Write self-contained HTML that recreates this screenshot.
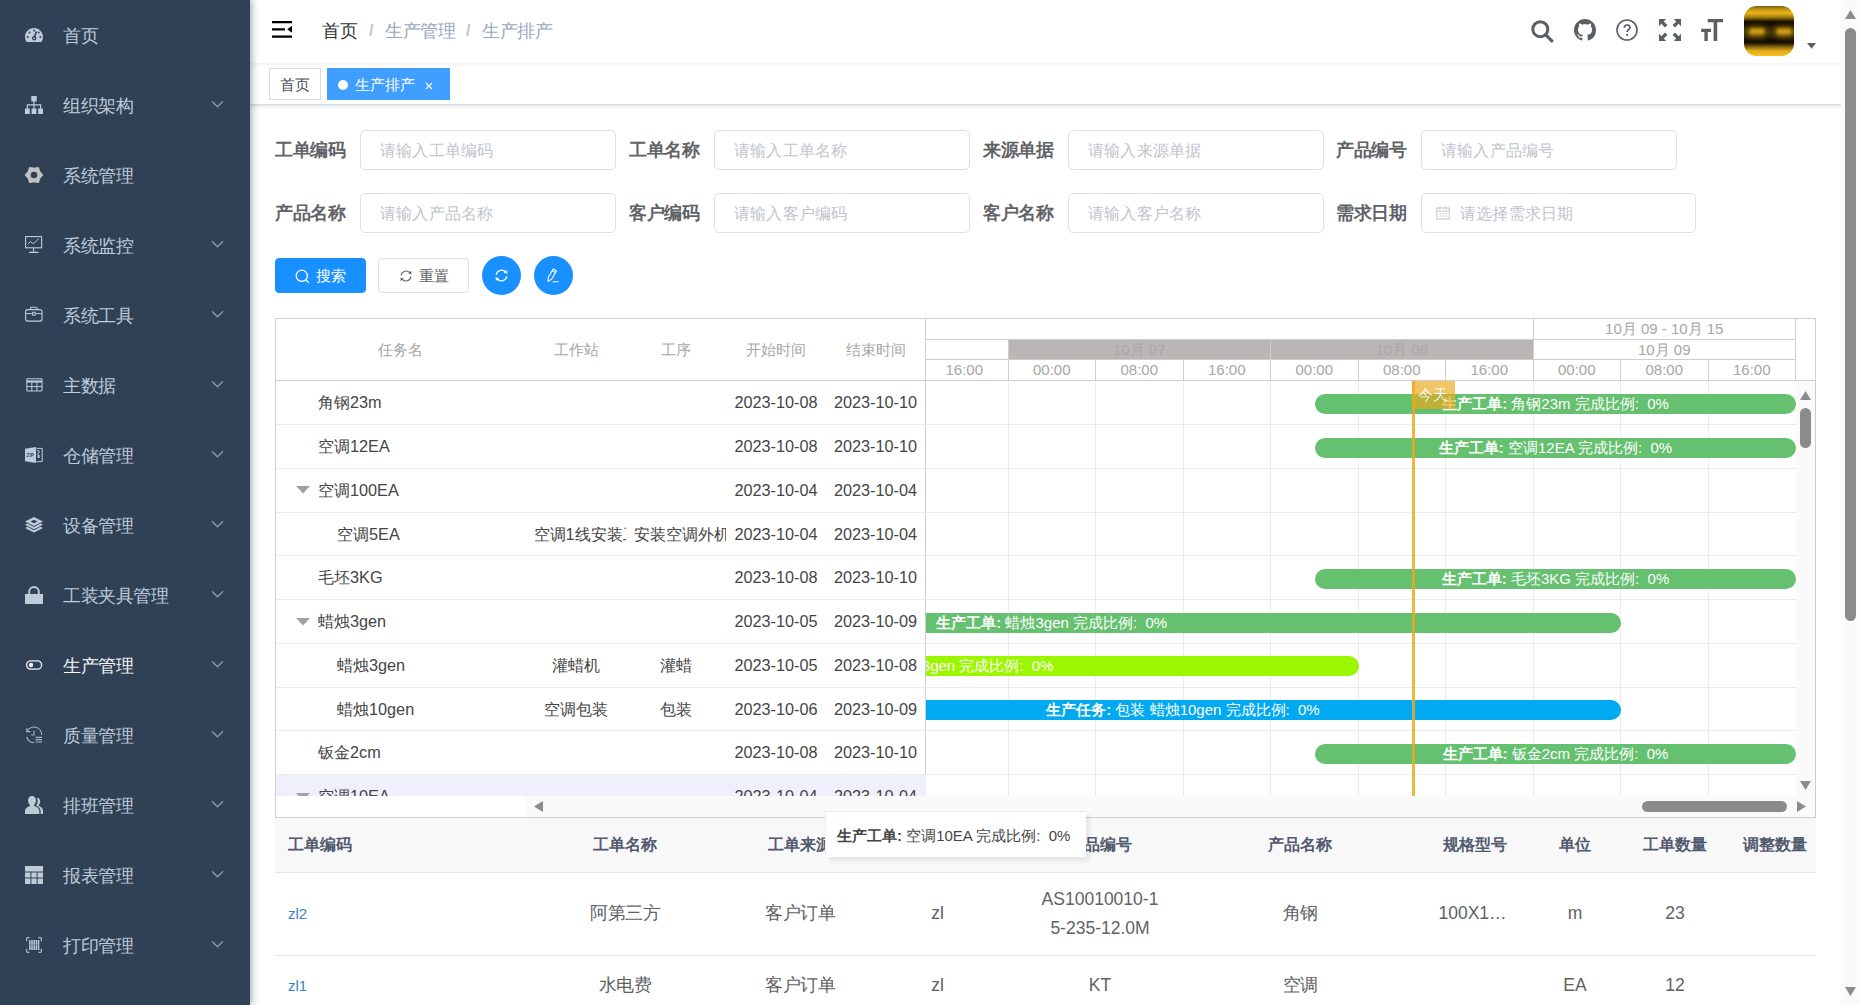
<!DOCTYPE html>
<html lang="zh">
<head>
<meta charset="utf-8">
<title>生产排产</title>
<style>
*{box-sizing:border-box;margin:0;padding:0}
html,body{width:1860px;height:1005px;overflow:hidden;background:#fff}
body{font-family:"Liberation Sans",sans-serif;font-size:17.5px;color:#303133;position:relative}
.abs{position:absolute}
/* sidebar */
#side{position:absolute;left:0;top:0;width:250px;height:1005px;background:#304156;box-shadow:2px 0 7px rgba(0,21,41,.35);z-index:20}
.mi{position:absolute;left:0;width:250px;height:70px;color:#bfcbd9;font-size:17.5px;line-height:70px}
.mi .tx{position:absolute;left:63px;top:1px;white-space:nowrap;letter-spacing:-.5px}
.mi svg.ic{position:absolute;left:25px;top:26px;width:18px;height:18px;fill:#bfcbd9}
.mi svg.ar{position:absolute;left:211px;top:30px;width:13px;height:9px;fill:none;stroke:#8d9aab;stroke-width:1.3}
.mi.act{color:#f4f4f5}
/* navbar */
#nav{position:absolute;left:250px;top:0;width:1592px;height:63px;background:#fff;box-shadow:0 1px 5px rgba(0,21,41,.08);z-index:5}
#tags{position:absolute;left:250px;top:63px;width:1592px;height:42px;background:#fff;border-bottom:1px solid #d8dce5;box-shadow:0 1px 4px 0 rgba(0,0,0,.12),0 0 4px 0 rgba(0,0,0,.04);z-index:4}
.tag{position:absolute;top:5px;height:32px;border:1px solid #d8dce5;font-size:15px;line-height:31.500px;color:#495060;background:#fff;white-space:nowrap}
.bc{position:absolute;top:0;line-height:62px;font-size:17.5px;white-space:nowrap;letter-spacing:-.5px}
/* form */
.lb{position:absolute;width:85px;height:40px;line-height:40px;font-weight:bold;color:#606266;font-size:17.5px;white-space:nowrap;letter-spacing:-.5px}
.in{position:absolute;height:40px;width:256px;border:1px solid #dcdfe6;border-radius:5px;background:#fff;color:#c0c4cc;font-size:16.25px;line-height:38px;padding-left:19px;white-space:nowrap;letter-spacing:.2px}
.btn{position:absolute;top:258px;height:35px;border-radius:4px;font-size:15px;line-height:33px;white-space:nowrap}
/* gantt */
#gantt{position:absolute;left:275px;top:318px;width:1541px;height:500px;border:1px solid #cecece;background:#fff;overflow:hidden;font-size:16.25px}
.gh{position:absolute;color:#a6a6a6;font-size:15px;text-align:center;white-space:nowrap}
.grow{position:absolute;left:0;width:650px;height:43.75px;border-bottom:1px solid #ebebeb;line-height:42px;font-size:16.25px;color:#454545;white-space:nowrap;overflow:hidden}
.grow span{position:absolute;top:0;text-align:center;overflow:hidden;height:43px}
.bar{position:absolute;height:20px;border-radius:10px;color:#fff;font-size:15px;line-height:20px;text-align:center;white-space:nowrap;overflow:hidden}
.bar b{font-weight:bold}
/* table */
.th{position:absolute;top:818px;height:55px;line-height:52.5px;font-weight:bold;color:#515a6e;font-size:16.25px;white-space:nowrap;text-align:center}
.td{position:absolute;color:#606266;font-size:17.5px;white-space:nowrap;text-align:center;line-height:29px}
.td.c{letter-spacing:-.5px}
</style>
</head>
<body>
<!-- SIDEBAR -->
<div id="side">
<div class="mi" style="top:0px"><svg class="ic" viewBox="0 0 18 18"><path d="M9 2C4 2 0 6 0 11c0 1.600.4 3.100 1.200 4.400.2.400.6.600 1 .600h13.600c.4 0 .8-.2 1-.600C17.600 14.100 18 12.600 18 11c0-5-4-9-9-9z"/><g fill="#304156"><circle cx="9" cy="4.600" r="1"/><circle cx="4.500" cy="6.500" r="1"/><circle cx="2.700" cy="11" r="1"/><circle cx="15.300" cy="11" r="1"/><circle cx="13.700" cy="6.600" r="1"/><path d="M10.600 5.200l1.500.5-1.500 4.800a2.200 2.200 0 1 1-1.500-.5z"/></g><circle cx="9" cy="12.300" r=".9" /></svg><span class="tx">首页</span></div>
<div class="mi" style="top:70px"><svg class="ic" viewBox="0 0 18 18"><path d="M6.300 0h5.400v5.400H6.300zM0 12.500h4.800V18H0zM6.600 12.500h4.800V18H6.600zM13.200 12.500H18V18h-4.800z"/><path d="M9 5v4M2.400 12.800V8.900h13.200v3.900M9 8.900v3.900" fill="none" stroke="#bfcbd9" stroke-width="1.200"/></svg><span class="tx">组织架构</span><svg class="ar" viewBox="0 0 13 9"><path d="M1 1.300l5.500 5.500L12 1.300"/></svg></div>
<div class="mi" style="top:140px"><svg class="ic" viewBox="0 0 18 18" style="fill:#c0c0c0"><path d="M16.90 9.00 L14.20 12.00 L12.95 15.84 L9.00 15.00 L5.05 15.84 L3.80 12.00 L1.10 9.00 L3.80 6.00 L5.05 2.16 L9.00 3.00 L12.95 2.16 L14.20 6.00z" stroke="#c0c0c0" stroke-width="2.400" stroke-linejoin="round"/><circle cx="9" cy="9" r="3.300" fill="#304156"/></svg><span class="tx">系统管理</span></div>
<div class="mi" style="top:210px"><svg class="ic" viewBox="0 0 18 18" style="fill:none;stroke:#bfcbd9;stroke-width:1.100"><rect x=".6" y=".6" width="16" height="11.200"/><path d="M8.600 12v4M4 16.400h9.500"/><path d="M3 8.200l2.500-2.800 2.300 2.200 2.200-1.400 3.800-3.500" stroke-width="1"/></svg><span class="tx">系统监控</span><svg class="ar" viewBox="0 0 13 9"><path d="M1 1.300l5.500 5.500L12 1.300"/></svg></div>
<div class="mi" style="top:280px"><svg class="ic" viewBox="0 0 18 18" style="fill:none;stroke:#bfcbd9;stroke-width:1.100"><rect x=".6" y="3.600" width="16.400" height="11.500" rx="2"/><path d="M5.500 3.500V2.200c0-.6.400-1 1-1h4.600c.6 0 1 .4 1 1v1.300"/><path d="M.8 7.600h6.800M10.200 7.600H17" stroke-width="1"/><rect x="7.600" y="6.300" width="2.600" height="2.800" stroke-width="1"/></svg><span class="tx">系统工具</span><svg class="ar" viewBox="0 0 13 9"><path d="M1 1.300l5.500 5.500L12 1.300"/></svg></div>
<div class="mi" style="top:350px"><svg class="ic" viewBox="0 0 18 18" style="fill:none;stroke:#bfcbd9;stroke-width:1.100"><rect x="1.800" y="2.700" width="15.200" height="12.300" rx=".8"/><path d="M1.800 5.500H17" stroke-width="2.200"/><path d="M1.800 10.600H17M6.800 6v9M11.900 6v9" stroke-width="1"/></svg><span class="tx">主数据</span><svg class="ar" viewBox="0 0 13 9"><path d="M1 1.300l5.500 5.500L12 1.300"/></svg></div>
<div class="mi" style="top:420px"><svg class="ic" viewBox="0 0 18 18"><path d="M0 2.800L11 1v16L0 15.200z"/><path d="M11.600 2.400h5.600v13.200h-5.600" fill="none" stroke="#bfcbd9" stroke-width="1"/><path d="M12.200 4h1.600v1.200h-1.600zM13.400 5.600H15v1.200h-1.600zM12.200 7.200h1.600v1.200h-1.600zM12.600 9h2v3h-2z"/><text x="1.600" y="10.900" font-size="4.600" font-weight="bold" fill="#304156" font-family="Liberation Sans">ZIP</text></svg><span class="tx">仓储管理</span><svg class="ar" viewBox="0 0 13 9"><path d="M1 1.300l5.500 5.500L12 1.300"/></svg></div>
<div class="mi" style="top:490px"><svg class="ic" viewBox="0 0 18 18"><path d="M9 1l9 4.500-9 4.500-9-4.500z"/><path d="M9 3.700l3.400 1.800L9 7.300 5.600 5.500z" fill="#304156"/><path d="M0 8.700l2.400-1.200L9 10.900l6.600-3.400L18 8.700l-9 4.500zM0 12l2.400-1.200L9 14.200l6.600-3.400L18 12l-9 4.500z"/></svg><span class="tx">设备管理</span><svg class="ar" viewBox="0 0 13 9"><path d="M1 1.300l5.500 5.500L12 1.300"/></svg></div>
<div class="mi" style="top:560px"><svg class="ic" viewBox="0 0 18 18"><path d="M0 8h18v10H0z"/><path d="M4.200 8.500V5.600C4.200 3 6.300 1 9 1s4.800 2 4.800 4.600v2.900" fill="none" stroke="#bfcbd9" stroke-width="1.900"/></svg><span class="tx">工装夹具管理</span><svg class="ar" viewBox="0 0 13 9"><path d="M1 1.300l5.500 5.500L12 1.300"/></svg></div>
<div class="mi act" style="top:630px"><svg class="ic" viewBox="0 0 18 18" style="fill:none;stroke:#f0f1f3;stroke-width:1.300"><rect x="1.600" y="4.800" width="15" height="8.400" rx="4.200"/><circle cx="6" cy="9" r="2.200" fill="#f4f4f5" stroke="none"/></svg><span class="tx">生产管理</span><svg class="ar" viewBox="0 0 13 9"><path d="M1 1.300l5.500 5.500L12 1.300"/></svg></div>
<div class="mi" style="top:700px"><svg class="ic" viewBox="0 0 18 18" style="fill:none;stroke:#a9b5c4;stroke-width:1.100"><path d="M2.200 5.200A7.600 7.600 0 0 1 16.600 9"/><path d="M1.800 10.800A7.600 7.600 0 0 0 9 16.600"/><path d="M1.800 2v3.600h3.700"/><path d="M9 4.800V9H6.200"/><path d="M10.600 11.400H17M10.600 13.700H17M10.600 16H17" stroke-width="1.200"/></svg><span class="tx">质量管理</span><svg class="ar" viewBox="0 0 13 9"><path d="M1 1.300l5.500 5.500L12 1.300"/></svg></div>
<div class="mi" style="top:770px"><svg class="ic" viewBox="0 0 18 18"><path d="M7 0c2.300 0 4 2 4 4.500 0 1.800-.8 3.600-2 4.500v1c2.600.7 5.400 2.300 5.400 5.300V18H0v-2.700C0 12.300 2.600 10.700 5 10V9C3.800 8.100 3 6.300 3 4.500 3 2 4.700 0 7 0z"/><path d="M12 1.800c1.900 0 3.200 1.600 3.200 3.600 0 1.500-.6 2.900-1.600 3.600v.9c2.100.6 4.400 1.900 4.400 4.300V18h-2.400v-2.700c0-2.800-2.200-4.600-4.600-5.500 1-.9 1.600-2.900 1.600-5.300 0-1-.3-1.900-.8-2.600.1 0 .1-.1.200-.1z"/></svg><span class="tx">排班管理</span><svg class="ar" viewBox="0 0 13 9"><path d="M1 1.300l5.500 5.500L12 1.300"/></svg></div>
<div class="mi" style="top:840px"><svg class="ic" viewBox="0 0 18 18"><path d="M0 0h18v5.400H0zM0 6.400h5.400v5.200H0zM6.400 6.400h5.200v5.200H6.400zM12.600 6.400H18v5.200h-5.400zM0 12.600h5.400V18H0zM6.400 12.600h5.200V18H6.400zM12.600 12.600H18V18h-5.400z"/></svg><span class="tx">报表管理</span><svg class="ar" viewBox="0 0 13 9"><path d="M1 1.300l5.500 5.500L12 1.300"/></svg></div>
<div class="mi" style="top:910px"><svg class="ic" viewBox="0 0 18 18" style="fill:none;stroke:#aeb9c8;stroke-width:1.200"><path d="M4.500 1.600H2.800c-.8 0-1.200.5-1.200 1.200v2.400M13.500 1.600h1.700c.8 0 1.200.5 1.200 1.200v2.400M4.500 16.400H2.800c-.8 0-1.200-.5-1.200-1.200v-2.400M13.500 16.400h1.700c.8 0 1.200-.5 1.200-1.200v-2.400"/><path d="M4.800 4v10M7 4v10M9.200 4v10M11.400 4v10M13.600 4v10" stroke-width="1.500" stroke="#bfcbd9"/><path d="M0 9h18" stroke="#304156" stroke-width="1" opacity=".35"/></svg><span class="tx">打印管理</span><svg class="ar" viewBox="0 0 13 9"><path d="M1 1.300l5.500 5.500L12 1.300"/></svg></div>
</div>
<!-- NAVBAR -->
<div id="nav">
<svg class="abs" style="left:21.500px;top:21px;width:20px;height:17px" viewBox="0 0 20 17"><path d="M0 0h20v2.200H0zM0 7.200h13v2.200H0zM0 14.600h20v2.200H0z" fill="#000"/><path d="M20 4.700v7l-4.800-3.500z" fill="#000"/></svg>
<span class="bc" style="left:72px;color:#303133">首页</span>
<span class="bc" style="left:119px;color:#c0c4cc;font-weight:bold;font-size:16px">/</span>
<span class="bc" style="left:135px;color:#97a8be">生产管理</span>
<span class="bc" style="left:216px;color:#c0c4cc;font-weight:bold;font-size:16px">/</span>
<span class="bc" style="left:232px;color:#97a8be">生产排产</span>
<!-- right icons -->
<svg class="abs" style="left:1280px;top:19px;width:24px;height:24px" viewBox="0 0 24 24" fill="none" stroke="#5a5e66" stroke-width="3"><circle cx="10.300" cy="10.200" r="7.500"/><path d="M15.800 15.800l6 6" stroke-linecap="round" stroke-width="3.200"/></svg>
<svg class="abs" style="left:1324px;top:19.200px;width:22px;height:22px" viewBox="0 0 16 16" fill="#5a5e66"><path d="M8 0C3.580 0 0 3.580 0 8c0 3.540 2.290 6.530 5.470 7.590.4.070.55-.17.550-.38 0-.19-.01-.82-.01-1.490-2.010.37-2.530-.49-2.690-.94-.09-.23-.48-.94-.82-1.130-.28-.15-.68-.52-.01-.53.630-.01 1.080.58 1.230.82.720 1.210 1.870.87 2.330.66.070-.52.280-.87.510-1.070-1.780-.2-3.640-.89-3.640-3.950 0-.87.310-1.590.82-2.150-.08-.2-.36-1.020.08-2.120 0 0 .67-.21 2.200.82.640-.18 1.320-.27 2-.27.680 0 1.360.09 2 .27 1.530-1.040 2.200-.82 2.200-.82.440 1.100.16 1.920.08 2.120.51.560.82 1.270.82 2.150 0 3.070-1.870 3.750-3.650 3.950.29.250.54.730.54 1.480 0 1.070-.01 1.930-.01 2.200 0 .21.150.46.550.38A8.013 8.013 0 0016 8c0-4.420-3.580-8-8-8z"/></svg>
<svg class="abs" style="left:1366.400px;top:19.200px;width:22px;height:22px" viewBox="0 0 22 22" fill="none" stroke="#5a5e66" stroke-width="1.600"><circle cx="11" cy="11" r="10"/><path d="M8.300 8.700c0-1.600 1.200-2.700 2.800-2.700s2.800 1 2.800 2.500c0 2.100-2.800 2.200-2.800 4.500" stroke-width="1.700"/><circle cx="11.100" cy="15.900" r="1.050" fill="#5a5e66" stroke="none"/></svg>
<svg class="abs" style="left:1409px;top:19.200px;width:22px;height:22px" viewBox="0 0 23 23" fill="#5a5e66"><path d="M0 0h7.500L5 2.500l3.800 3.800-2.500 2.500L2.500 5 0 7.500zM23 0v7.500L20.500 5l-3.800 3.800-2.500-2.500L18 2.500 15.500 0zM0 23v-7.500L2.500 18l3.800-3.800 2.500 2.500L5 20.500 7.500 23zM23 23h-7.500l2.500-2.500-3.800-3.800 2.500-2.500 3.800 3.800 2.500-2.500z"/></svg>
<svg class="abs" style="left:1449px;top:19px;width:25px;height:22px" viewBox="0 0 25 22" fill="#5a5e66"><path d="M8.700 0H24v3.300H18.200V22h-3.600V3.300H8.700z"/><path d="M2.200 9.800h9.800v3.200H8.800V22H5.400V13H2.200z"/></svg>
<div class="abs" style="left:1494px;top:6px;width:50px;height:50px;border-radius:12.500px;background:linear-gradient(180deg,#7d5f0e 0%,#b8900f 6%,#eab419 14%,#a88110 22%,#1a1302 31%,#120d01 36%,#2a2004 44%,#3a2c06 52%,#2a2004 60%,#120d01 69%,#1a1302 74%,#8a6a10 82%,#e5ad17 90%,#f8bc1e 100%);overflow:hidden">
<div class="abs" style="left:5.500px;top:23.300px;width:14px;height:4.500px;border-radius:2px;background:#f7bb1c;filter:blur(1.800px)"></div>
<div class="abs" style="left:33px;top:23.300px;width:14px;height:4.500px;border-radius:2px;background:#f7bb1c;filter:blur(1.800px)"></div>
<div class="abs" style="left:2px;top:20.500px;width:21px;height:10px;border-radius:5px;background:#b98c12;filter:blur(3px);opacity:.7"></div>
<div class="abs" style="left:29.500px;top:20.500px;width:21px;height:10px;border-radius:5px;background:#b98c12;filter:blur(3px);opacity:.7"></div>
</div>
<svg class="abs" style="left:1556.500px;top:43.300px;width:9px;height:5.800px" viewBox="0 0 11 7"><path d="M0 0h11L5.500 7z" fill="#5a5e66"/></svg>
</div>
<div id="tags">
<div class="tag" style="left:19px;width:52px;padding-left:10px">首页</div>
<div class="tag" style="left:77px;width:123px;background:#409eff;border-color:#409eff;color:#fff;padding-left:27px">生产排产
<div class="abs" style="left:10px;top:10.800px;width:10px;height:10px;border-radius:5px;background:#fff"></div>
<svg class="abs" style="left:96.500px;top:12.500px;width:8px;height:8px" viewBox="0 0 8 8"><path d="M1 1l6 6M7 1L1 7" stroke="#fff" stroke-width="1.100" fill="none"/></svg>
</div>
</div>
<!-- MAIN -->
<div id="main">
<div class="lb" style="left:275px;top:130px">工单编码</div>
<div class="in" style="left:360px;top:130px">请输入工单编码</div>
<div class="lb" style="left:629px;top:130px">工单名称</div>
<div class="in" style="left:714px;top:130px">请输入工单名称</div>
<div class="lb" style="left:983px;top:130px">来源单据</div>
<div class="in" style="left:1068px;top:130px">请输入来源单据</div>
<div class="lb" style="left:1336px;top:130px">产品编号</div>
<div class="in" style="left:1421px;top:130px">请输入产品编号</div>
<div class="lb" style="left:275px;top:193px">产品名称</div>
<div class="in" style="left:360px;top:193px">请输入产品名称</div>
<div class="lb" style="left:629px;top:193px">客户编码</div>
<div class="in" style="left:714px;top:193px">请输入客户编码</div>
<div class="lb" style="left:983px;top:193px">客户名称</div>
<div class="in" style="left:1068px;top:193px">请输入客户名称</div>
<div class="lb" style="left:1336px;top:193px">需求日期</div>
<div class="in" style="left:1421px;top:193px;width:275px;padding-left:38px">请选择需求日期<svg class="abs" style="left:14px;top:12px;width:14px;height:14px" viewBox="0 0 14 14" fill="none" stroke="#c0c4cc" stroke-width="1"><rect x=".8" y="2" width="12.400" height="11"/><path d="M.8 5h12.400M4 .6v2.800M10 .6v2.800M3.500 7.500h1.500M6.300 7.500h1.500M9 7.500h1.500M3.500 10h1.500M6.300 10h1.500M9 10h1.500"/></svg></div>
<div class="btn" style="left:275px;width:91px;background:#1890ff;border:1px solid #1890ff;color:#fff;padding-left:40px">搜索<svg class="abs" style="left:19px;top:9.500px;width:15px;height:15px" viewBox="0 0 15 15" fill="none" stroke="#fff" stroke-width="1.300"><circle cx="6.800" cy="6.800" r="5.600"/><path d="M11 11l3 3"/></svg></div>
<div class="btn" style="left:378px;width:91px;background:#fff;border:1px solid #dcdfe6;color:#606266;padding-left:40px">重置<svg class="abs" style="left:20px;top:10px;width:14px;height:14px" viewBox="0 0 14 14" fill="none" stroke="#606266" stroke-width="1.100"><path d="M2.100 6.300A5 5 0 0 1 11 4M11.900 7.700A5 5 0 0 1 3 10"/><path d="M12.300 1.800l.2 3.500-3.300-.9zM1.700 12.200l-.2-3.500 3.300.9z" fill="#606266" stroke="none"/></svg></div>
<div class="abs" style="left:482px;top:256px;width:39px;height:39px;border-radius:50%;background:#1890ff"><svg class="abs" style="left:12px;top:12px;width:15px;height:15px" viewBox="0 0 14 14" fill="none" stroke="#fff" stroke-width="1.300"><path d="M2.100 6.300A5 5 0 0 1 11 4M11.900 7.700A5 5 0 0 1 3 10"/><path d="M12.300 1.800l.2 3.500-3.300-.9zM1.700 12.200l-.2-3.500 3.300.9z" fill="#fff" stroke="none"/></svg></div>
<div class="abs" style="left:534px;top:256px;width:39px;height:39px;border-radius:50%;background:#1890ff"><svg class="abs" style="left:11px;top:11.500px;width:16px;height:16px" viewBox="0 0 16 16" fill="none" stroke="#fff" stroke-width="1.100" stroke-linejoin="round"><path d="M8.160 1.030L11.440 2.970 6.610 11.160 3 13.400 3.330 9.220z"/><path d="M7.300 2.700l3.200 1.900M7.600 13.700h6"/></svg></div>
<!-- GANTT -->
<div id="gantt">
<div class="abs" style="left:0;top:0;width:649px;height:62px;border-bottom:1px solid #cecece"></div>
<div class="gh" style="left:64.5px;width:120px;top:20px;line-height:21px">任务名</div>
<div class="gh" style="left:240px;width:120px;top:20px;line-height:21px">工作站</div>
<div class="gh" style="left:340px;width:120px;top:20px;line-height:21px">工序</div>
<div class="gh" style="left:439.5px;width:120px;top:20px;line-height:21px">开始时间</div>
<div class="gh" style="left:539.5px;width:120px;top:20px;line-height:21px">结束时间</div>
<div class="abs" style="left:649px;top:0;width:1px;height:477px;background:#cecece"></div>
<div class="abs" style="left:650px;top:0;width:890px;height:62px;border-bottom:1px solid #cecece;overflow:hidden" id="th">
<div class="abs" style="left:0;top:20px;width:870px;height:1px;background:#cecece"></div>
<div class="abs" style="left:0;top:40px;width:870px;height:1px;background:#cecece"></div>
<div class="abs" style="left:82.5px;top:21px;width:524.5px;height:19px;background:#bab6b6"></div>
<div class="abs" style="left:344px;top:21px;width:1px;height:19px;background:#cecece"></div>
<div class="abs" style="left:607px;top:0;width:1px;height:61px;background:#cecece"></div>
<div class="abs" style="left:869px;top:0;width:1px;height:61px;background:#cecece"></div>
<div class="abs" style="left:82px;top:21px;width:1px;height:19px;background:#cecece"></div>
<div class="abs" style="left:82px;top:41px;width:1px;height:20px;background:#cecece"></div>
<div class="abs" style="left:169px;top:41px;width:1px;height:20px;background:#cecece"></div>
<div class="abs" style="left:257px;top:41px;width:1px;height:20px;background:#cecece"></div>
<div class="abs" style="left:344px;top:41px;width:1px;height:20px;background:#cecece"></div>
<div class="abs" style="left:432px;top:41px;width:1px;height:20px;background:#cecece"></div>
<div class="abs" style="left:519px;top:41px;width:1px;height:20px;background:#cecece"></div>
<div class="abs" style="left:607px;top:41px;width:1px;height:20px;background:#cecece"></div>
<div class="abs" style="left:694px;top:41px;width:1px;height:20px;background:#cecece"></div>
<div class="abs" style="left:782px;top:41px;width:1px;height:20px;background:#cecece"></div>
<div class="gh" style="left:607px;width:262.5px;top:0;line-height:20px">10月 09 - 10月 15</div>
<div class="gh" style="left:82px;width:262.5px;top:21px;line-height:19px;color:#aaa6a6">10月 07</div>
<div class="gh" style="left:344.5px;width:262.5px;top:21px;line-height:19px;color:#aaa6a6">10月 08</div>
<div class="gh" style="left:607px;width:262.5px;top:21px;line-height:19px">10月 09</div>
<div class="gh" style="left:-5.5px;width:87.5px;top:41px;line-height:20px">16:00</div>
<div class="gh" style="left:82.0px;width:87.5px;top:41px;line-height:20px">00:00</div>
<div class="gh" style="left:169.5px;width:87.5px;top:41px;line-height:20px">08:00</div>
<div class="gh" style="left:257.0px;width:87.5px;top:41px;line-height:20px">16:00</div>
<div class="gh" style="left:344.5px;width:87.5px;top:41px;line-height:20px">00:00</div>
<div class="gh" style="left:432.0px;width:87.5px;top:41px;line-height:20px">08:00</div>
<div class="gh" style="left:519.5px;width:87.5px;top:41px;line-height:20px">16:00</div>
<div class="gh" style="left:607.0px;width:87.5px;top:41px;line-height:20px">00:00</div>
<div class="gh" style="left:694.5px;width:87.5px;top:41px;line-height:20px">08:00</div>
<div class="gh" style="left:782.0px;width:87.5px;top:41px;line-height:20px">16:00</div>
</div>
<div class="abs" style="left:0;top:62px;width:1520px;height:415px;overflow:hidden" id="gd">
<div class="grow" style="top:0.25px;">
<span style="left:42px;text-align:left">角钢23m</span>
<span style="left:450px;width:100px">2023-10-08</span>
<span style="left:550px;width:99px">2023-10-10</span>
</div>
<div class="grow" style="top:44.0px;">
<span style="left:42px;text-align:left">空调12EA</span>
<span style="left:450px;width:100px">2023-10-08</span>
<span style="left:550px;width:99px">2023-10-10</span>
</div>
<div class="grow" style="top:87.75px;">
<svg class="abs" style="left:20px;top:17.500px;width:14px;height:8px" viewBox="0 0 14 8"><path d="M0 0h14L7 7.500z" fill="#a0a0a0"/></svg>
<span style="left:42px;text-align:left">空调100EA</span>
<span style="left:450px;width:100px">2023-10-04</span>
<span style="left:550px;width:99px">2023-10-04</span>
</div>
<div class="grow" style="top:131.5px;">
<span style="left:61px;text-align:left">空调5EA</span>
<span style="left:250px;width:100px;padding:0 7.500px">空调1线安装工位</span>
<span style="left:350px;width:100px;padding:0 7.500px">安装空调外机</span>
<span style="left:450px;width:100px">2023-10-04</span>
<span style="left:550px;width:99px">2023-10-04</span>
</div>
<div class="grow" style="top:175.25px;">
<span style="left:42px;text-align:left">毛坯3KG</span>
<span style="left:450px;width:100px">2023-10-08</span>
<span style="left:550px;width:99px">2023-10-10</span>
</div>
<div class="grow" style="top:219.0px;">
<svg class="abs" style="left:20px;top:17.500px;width:14px;height:8px" viewBox="0 0 14 8"><path d="M0 0h14L7 7.500z" fill="#a0a0a0"/></svg>
<span style="left:42px;text-align:left">蜡烛3gen</span>
<span style="left:450px;width:100px">2023-10-05</span>
<span style="left:550px;width:99px">2023-10-09</span>
</div>
<div class="grow" style="top:262.75px;">
<span style="left:61px;text-align:left">蜡烛3gen</span>
<span style="left:250px;width:100px;padding:0 7.500px">灌蜡机</span>
<span style="left:350px;width:100px;padding:0 7.500px">灌蜡</span>
<span style="left:450px;width:100px">2023-10-05</span>
<span style="left:550px;width:99px">2023-10-08</span>
</div>
<div class="grow" style="top:306.5px;">
<span style="left:61px;text-align:left">蜡烛10gen</span>
<span style="left:250px;width:100px;padding:0 7.500px">空调包装</span>
<span style="left:350px;width:100px;padding:0 7.500px">包装</span>
<span style="left:450px;width:100px">2023-10-06</span>
<span style="left:550px;width:99px">2023-10-09</span>
</div>
<div class="grow" style="top:350.25px;">
<span style="left:42px;text-align:left">钣金2cm</span>
<span style="left:450px;width:100px">2023-10-08</span>
<span style="left:550px;width:99px">2023-10-10</span>
</div>
<div class="grow" style="top:394.0px; background:#f0effc;">
<svg class="abs" style="left:20px;top:17.500px;width:14px;height:8px" viewBox="0 0 14 8"><path d="M0 0h14L7 7.500z" fill="#a0a0a0"/></svg>
<span style="left:42px;text-align:left">空调10EA</span>
<span style="left:450px;width:100px">2023-10-04</span>
<span style="left:550px;width:99px">2023-10-04</span>
</div>
<div class="abs" style="left:650px;top:0;width:870px;height:415px;overflow:hidden"><div class="abs" style="left:82px;top:0;width:1px;height:420px;background:#ebebeb"></div>
<div class="abs" style="left:169px;top:0;width:1px;height:420px;background:#ebebeb"></div>
<div class="abs" style="left:257px;top:0;width:1px;height:420px;background:#ebebeb"></div>
<div class="abs" style="left:344px;top:0;width:1px;height:420px;background:#ebebeb"></div>
<div class="abs" style="left:432px;top:0;width:1px;height:420px;background:#ebebeb"></div>
<div class="abs" style="left:519px;top:0;width:1px;height:420px;background:#ebebeb"></div>
<div class="abs" style="left:607px;top:0;width:1px;height:420px;background:#ebebeb"></div>
<div class="abs" style="left:694px;top:0;width:1px;height:420px;background:#ebebeb"></div>
<div class="abs" style="left:782px;top:0;width:1px;height:420px;background:#ebebeb"></div>
<div class="abs" style="left:0;top:43px;width:870px;height:1px;background:#ebebeb"></div>
<div class="abs" style="left:0;top:87px;width:870px;height:1px;background:#ebebeb"></div>
<div class="abs" style="left:0;top:131px;width:870px;height:1px;background:#ebebeb"></div>
<div class="abs" style="left:0;top:174px;width:870px;height:1px;background:#ebebeb"></div>
<div class="abs" style="left:0;top:218px;width:870px;height:1px;background:#ebebeb"></div>
<div class="abs" style="left:0;top:262px;width:870px;height:1px;background:#ebebeb"></div>
<div class="abs" style="left:0;top:306px;width:870px;height:1px;background:#ebebeb"></div>
<div class="abs" style="left:0;top:349px;width:870px;height:1px;background:#ebebeb"></div>
<div class="abs" style="left:0;top:393px;width:870px;height:1px;background:#ebebeb"></div>
<div class="abs" style="left:0;top:437px;width:870px;height:1px;background:#ebebeb"></div>
<div class="bar" style="left:389px;top:12.75px;width:481px;background:#65c16f;"><b>生产工单:</b> 角钢23m 完成比例:&nbsp; 0%</div>
<div class="bar" style="left:389px;top:56.5px;width:481px;background:#65c16f;"><b>生产工单:</b> 空调12EA 完成比例:&nbsp; 0%</div>
<div class="bar" style="left:389px;top:187.75px;width:481px;background:#65c16f;"><b>生产工单:</b> 毛坯3KG 完成比例:&nbsp; 0%</div>
<div class="bar" style="left:-443px;top:231.5px;width:1137.5px;background:#65c16f;"><b>生产工单:</b> 蜡烛3gen 完成比例:&nbsp; 0%</div>
<div class="bar" style="left:-443px;top:275.25px;width:876px;background:#9cf600;"><b>生产任务:</b> 灌蜡 蜡烛3gen 完成比例:&nbsp; 0%</div>
<div class="bar" style="left:-180.5px;top:319.0px;width:875.0px;background:#00a9f1;"><b>生产任务:</b> 包装 蜡烛10gen 完成比例:&nbsp; 0%</div>
<div class="bar" style="left:389px;top:362.75px;width:481px;background:#65c16f;"><b>生产工单:</b> 钣金2cm 完成比例:&nbsp; 0%</div>
<div class="abs" style="left:486.2px;top:0;width:2.5px;height:420px;background:rgba(234,170,30,.85)"><div class="abs" style="left:0;top:0;width:43px;height:28px;background:rgba(234,170,30,.85);opacity:.8;color:#fff;font-size:15px;line-height:15px;padding:6.250px;white-space:nowrap">今天</div></div></div>
</div>
<div class="abs" style="left:1520px;top:62px;width:19px;height:415px;background:#fafafa"></div>
<div class="abs" style="left:250px;top:477px;width:1289px;height:21px;background:#fafafa"></div>
<svg class="abs" style="left:1524px;top:72px;width:11px;height:9px" viewBox="0 0 11 9"><path d="M5.500 0L11 9H0z" fill="#8b8b8b"/></svg>
<div class="abs" style="left:1524px;top:89px;width:11px;height:40px;border-radius:5.500px;background:#8b8b8b"></div>
<svg class="abs" style="left:1524px;top:462px;width:11px;height:9px" viewBox="0 0 11 9"><path d="M0 0h11L5.500 9z" fill="#8b8b8b"/></svg>
<svg class="abs" style="left:258px;top:482px;width:9px;height:11px" viewBox="0 0 9 11"><path d="M9 0v11L0 5.500z" fill="#8b8b8b"/></svg>
<div class="abs" style="left:1366px;top:482px;width:145px;height:11px;border-radius:5.500px;background:#8b8b8b"></div>
<svg class="abs" style="left:1521px;top:482px;width:9px;height:11px" viewBox="0 0 9 11"><path d="M0 0v11l9-5.500z" fill="#8b8b8b"/></svg>
</div>
<!-- /GANTT -->
<!-- TABLE -->
<div class="abs" style="left:275px;top:818px;width:1541px;height:55px;background:#f8f8f9;border-bottom:1px solid #dfe6ec"></div>
<div class="th" style="left:288px;text-align:left">工单编码</div>
<div class="th" style="left:565px;width:120px">工单名称</div>
<div class="th" style="left:740px;width:120px">工单来源</div>
<div class="th" style="left:877.5px;width:120px">订单编号</div>
<div class="th" style="left:1040px;width:120px">产品编号</div>
<div class="th" style="left:1240px;width:120px">产品名称</div>
<div class="th" style="left:1415px;width:120px">规格型号</div>
<div class="th" style="left:1515px;width:120px">单位</div>
<div class="th" style="left:1615px;width:120px">工单数量</div>
<div class="th" style="left:1715px;width:120px">调整数量</div>
<div class="abs" style="left:275px;top:955px;width:1541px;height:1px;background:#dfe6ec"></div>
<div class="td" style="left:288px;top:899px;text-align:left;color:#3a83c7;font-size:15px">zl2</div>
<div class="td c" style="left:525px;width:200px;top:899.0px;">阿第三方</div>
<div class="td c" style="left:700px;width:200px;top:899.0px;">客户订单</div>
<div class="td" style="left:837.5px;width:200px;top:899.0px;">zl</div>
<div class="td" style="left:1000px;width:200px;top:884.9px;">AS10010010-1</div>
<div class="td" style="left:1000px;width:200px;top:913.7px;">5-235-12.0M</div>
<div class="td c" style="left:1200px;width:200px;top:899.0px;">角钢</div>
<div class="td" style="left:1372.5px;width:200px;top:899.0px;letter-spacing:0">100X1…</div>
<div class="td" style="left:1475px;width:200px;top:899.0px;">m</div>
<div class="td" style="left:1575px;width:200px;top:899.0px;">23</div>
<div class="td" style="left:288px;top:971.300px;text-align:left;color:#3a83c7;font-size:15px">zl1</div>
<div class="td c" style="left:525px;width:200px;top:970.8px;">水电费</div>
<div class="td c" style="left:700px;width:200px;top:970.8px;">客户订单</div>
<div class="td" style="left:837.5px;width:200px;top:970.8px;">zl</div>
<div class="td" style="left:1000px;width:200px;top:970.8px;">KT</div>
<div class="td c" style="left:1200px;width:200px;top:970.8px;">空调</div>
<div class="td" style="left:1475px;width:200px;top:970.8px;">EA</div>
<div class="td" style="left:1575px;width:200px;top:970.8px;">12</div>
<div class="abs" style="left:824.500px;top:811px;width:261px;height:46px;background:#fff;border-left:1px solid rgba(0,0,0,.07);border-top:1px solid rgba(0,0,0,.07);box-shadow:3.750px 3.750px 3.750px rgba(0,0,0,.07);font-size:15px;color:#454545;line-height:20px;padding:13.700px 0 0 11.500px;white-space:nowrap;z-index:30"><b>生产工单:</b> 空调10EA 完成比例:&nbsp; 0%</div>
<div class="abs" style="left:1841px;top:0;width:19px;height:1005px;background:#fafafa;z-index:40"></div>
<svg class="abs" style="left:1845px;top:10px;width:11px;height:9px;z-index:41" viewBox="0 0 11 9"><path d="M5.500 0L11 9H0z" fill="#8b8b8b"/></svg>
<div class="abs" style="left:1845px;top:28px;width:11px;height:593px;border-radius:5.500px;background:#8b8b8b;z-index:41"></div>
<svg class="abs" style="left:1845px;top:987px;width:11px;height:9px;z-index:41" viewBox="0 0 11 9"><path d="M0 0h11L5.500 9z" fill="#8b8b8b"/></svg>
<!-- /TABLE -->
</div>
</body>
</html>
